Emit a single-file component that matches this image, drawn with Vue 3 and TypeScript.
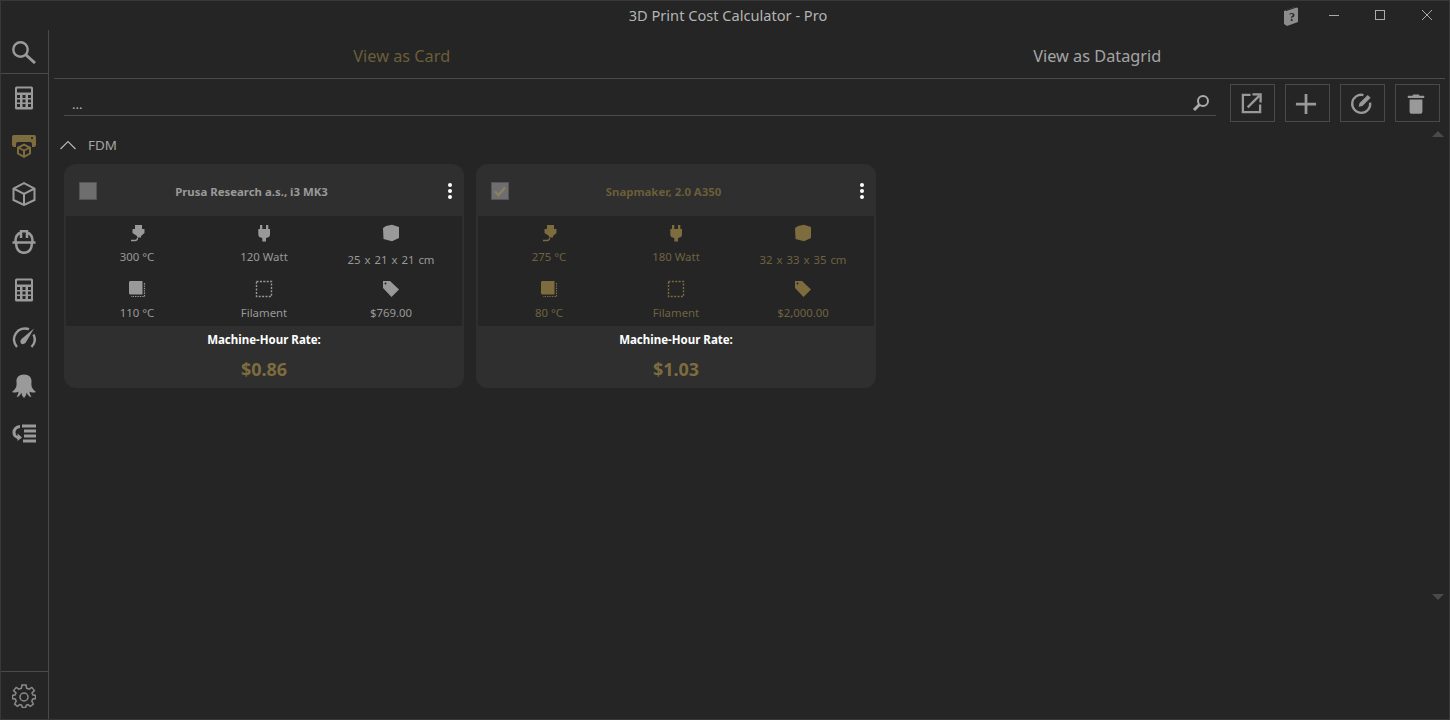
<template>
  <div class="window">
    <header class="titlebar">
      <span class="title">3D Print Cost Calculator - Pro</span>
      <div class="winControls">
        <svg class="helpBook" viewBox="0 0 14 20" width="14" height="20">
          <path d="M0 5 L11 1 L14 2 L14 16 L3 20 L0 18 Z" fill="#8c8c8c" />
          <path d="M2 4.6 L12.6 1" stroke="#252525" stroke-width="1" fill="none" />
          <text x="5" y="15" class="helpMark">?</text>
        </svg>
        <button class="winBtn" aria-label="minimize">
          <svg viewBox="0 0 12 12" width="12" height="12"><path d="M1 6.5 H11" stroke="#aaa" fill="none" /></svg>
        </button>
        <button class="winBtn" aria-label="maximize">
          <svg viewBox="0 0 12 12" width="12" height="12"><rect x="1.5" y="1.5" width="9" height="9" stroke="#aaa" fill="none" /></svg>
        </button>
        <button class="winBtn closeBtn" aria-label="close">
          <svg viewBox="0 0 12 12" width="12" height="12"><path d="M1 1 L11 11 M11 1 L1 11" stroke="#aaa" fill="none" /></svg>
        </button>
      </div>
    </header>

    <div class="main">
      <nav class="sidebar">
        <div class="navSearch">
          <svg viewBox="0 0 24 24" width="24" height="24">
            <circle cx="8.5" cy="9.5" r="7.2" fill="none" stroke="currentColor" stroke-width="2.4" />
            <path d="M13.5 14.5 L23 23" stroke="currentColor" stroke-width="3" fill="none" />
          </svg>
        </div>
        <div class="navList">
          <div v-for="item in navItems" :key="item.name" class="navItem" :class="{ active: item.active }">
            <svg viewBox="0 0 24 24" width="24" height="24">
              <path v-if="item.fill" :d="item.fill" fill="currentColor" fill-rule="evenodd" />
              <path v-if="item.line" :d="item.line" fill="none" stroke="currentColor" :stroke-width="item.weight ?? 2" />
            </svg>
          </div>
        </div>
        <div class="navSettings">
          <svg viewBox="0 0 24 24" width="24" height="24" class="gear">
            <path
              d="M10 1 H14 L14.6 4.2 L17 5.2 L19.8 3.4 L22.4 6.6 L20 9 L20.8 10.8 L23.5 11.5 V14.5 L20.6 15.2 L19.8 17.2 L21.4 20 L18.4 22.4 L16 20.6 L14.4 21.2 L13.6 23.5 H10.4 L9.6 21.2 L7.8 20.6 L5.4 22.4 L2.6 20 L4.2 17.2 L3.4 15.2 L0.5 14.5 V11.5 L3.2 10.8 L4 9 L1.6 6.6 L4.2 3.4 L7 5.2 L9.4 4.2 Z"
              fill="none"
              stroke="currentColor"
              stroke-width="1.5"
            />
            <circle cx="12" cy="13" r="4" fill="none" stroke="currentColor" stroke-width="1.5" />
          </svg>
        </div>
      </nav>

      <section class="content">
        <div class="tabs">
          <div class="tab activeTab">View as Card</div>
          <div class="tab">View as Datagrid</div>
        </div>

        <div class="toolbar">
          <div class="searchBox">
            <span class="searchText">...</span>
            <svg class="searchGlass" viewBox="0 0 18 18" width="18" height="18">
              <circle cx="11" cy="7" r="5" fill="none" stroke="#aaa" stroke-width="2" />
              <path d="M7.5 10.5 L2 16" stroke="#aaa" stroke-width="3" fill="none" />
            </svg>
          </div>
          <button class="toolBtn" aria-label="open">
            <svg viewBox="0 0 24 24" width="23" height="23">
              <path d="M11 3 H3 V21 H21 V13" fill="none" stroke="#999" stroke-width="2.4" />
              <path d="M8 16 L20 4 M13 2.5 H21.5 V11" fill="none" stroke="#999" stroke-width="2.4" />
            </svg>
          </button>
          <button class="toolBtn" aria-label="add">
            <svg viewBox="0 0 24 24" width="22" height="22">
              <path d="M12 1 V23 M1 12 H23" fill="none" stroke="#999" stroke-width="3" />
            </svg>
          </button>
          <button class="toolBtn" aria-label="edit">
            <svg viewBox="0 0 24 24" width="23" height="23">
              <path d="M14 3.2 A9.4 9.4 0 1 0 21 11" fill="none" stroke="#999" stroke-width="2.4" />
              <path d="M9 15.5 L10 11.5 L18.5 3 L21.5 6 L13 14.5 Z" fill="#999" />
            </svg>
          </button>
          <button class="toolBtn" aria-label="delete">
            <svg viewBox="0 0 24 24" width="22" height="22">
              <path d="M9 1.5 H15 L16 3 H21 V5.5 H3 V3 H8 Z" fill="#999" />
              <path d="M5 7 H19 V20.5 Q19 22.5 17 22.5 H7 Q5 22.5 5 20.5 Z" fill="#999" />
            </svg>
          </button>
        </div>

        <div class="listArea">
          <div class="list">
            <div class="groupHead">
              <svg viewBox="0 0 16 10" width="16" height="10">
                <path d="M0.5 9 L8 1.5 L15.5 9" fill="none" stroke="#b5b5b5" stroke-width="1.2" />
              </svg>
              <span>FDM</span>
            </div>
            <div class="cards">
              <article
                v-for="printer in printers"
                :key="printer.name"
                class="card"
                :class="{ selected: printer.selected }"
              >
                <div class="cardHead">
                  <span class="check">
                    <svg v-if="printer.selected" viewBox="0 0 18 18" width="18" height="18">
                      <path d="M4 9.5 L7.5 13 L14 5.5" fill="none" stroke="#8a8163" stroke-width="2.4" />
                    </svg>
                  </span>
                  <span class="cardName">{{ printer.name }}</span>
                  <span class="dots"><i></i><i></i><i></i></span>
                </div>
                <div class="specs">
                  <div v-for="spec in specsOf(printer)" :key="spec.key" class="spec">
                    <svg viewBox="0 0 18 18" width="18" height="18">
                      <path v-if="icons[spec.key]" :d="icons[spec.key]" fill="currentColor" fill-rule="evenodd" />
                      <path
                        v-if="spec.key === 'material'"
                        d="M1.5 1.5 H16.5 V16.5 H1.5 Z"
                        fill="none"
                        stroke="currentColor"
                        stroke-width="1.4"
                        stroke-dasharray="2 1.4"
                      />
                      <path
                        v-if="spec.key === 'bed'"
                        d="M16.5 3 V16.5 H3"
                        fill="none"
                        stroke="currentColor"
                        stroke-width="1.2"
                        stroke-dasharray="1.4 1"
                      />
                      <path
                        v-if="spec.key === 'nozzle'"
                        d="M3 16.5 H7 Q9.5 16.5 9.5 14"
                        fill="none"
                        stroke="currentColor"
                        stroke-width="1.3"
                      />
                    </svg>
                    <span class="specLabel" :class="{ low: spec.key === 'size' }">{{ spec.text }}</span>
                  </div>
                </div>
                <div class="cardFoot">
                  <span class="rateLabel">Machine-Hour Rate:</span>
                  <span class="rate">{{ printer.rate }}</span>
                </div>
              </article>
            </div>
          </div>
          <div class="scroll">
            <span class="arrow up"></span>
            <span class="arrow down"></span>
          </div>
        </div>
      </section>
    </div>
  </div>
</template>

<script setup lang="ts">
interface IPrinter {
  name: string;
  selected: boolean;
  nozzle: string;
  power: string;
  size: string;
  bed: string;
  material: string;
  price: string;
  rate: string;
}

interface INavItem {
  name: string;
  active?: boolean;
  fill?: string;
  line?: string;
  weight?: number;
}

const calc =
  "M4.5 0.5 H19.5 Q21 0.5 21 2 V22 Q21 23.5 19.5 23.5 H4.5 Q3 23.5 3 22 V2 Q3 0.5 4.5 0.5 Z M5 2.5 H19 V6.5 H5 Z M5 9 H8 V12 H5 Z M10.5 9 H13.5 V12 H10.5 Z M16 9 H19 V12 H16 Z M5 13.5 H8 V16.5 H5 Z M10.5 13.5 H13.5 V16.5 H10.5 Z M16 13.5 H19 V16.5 H16 Z M5 18 H8 V21 H5 Z M10.5 18 H13.5 V21 H10.5 Z M16 18 H19 V21 H16 Z";

const navItems: INavItem[] = [
  { name: "calculator", fill: calc },
  {
    name: "printers",
    active: true,
    fill: "M2 1 H22 Q24 1 24 3 V11 Q24 13 22 13 H20 V10 Q20 8 18 8 H6 Q4 8 4 10 V13 H2 Q0 13 0 11 V3 Q0 1 2 1 Z M20 3 A1 1 0 1 0 20.01 3 Z M12 9.5 L19 13 V20 L12 24 L5 20 V13 Z M12 11.8 L8.4 13.7 L12 15.6 L15.6 13.7 Z M7 15 V19 L11 21.3 V17 Z M17 15 L13 17 V21.3 L17 19 Z",
  },
  { name: "filament", line: "M12 1.2 L22.5 6.5 V18 L12 23 L1.5 18 V6.5 Z M1.5 6.5 L12 11.8 L22.5 6.5 M12 11.8 V23" },
  {
    name: "worker",
    weight: 2.5,
    line: "M3.5 11.5 Q3.5 4 9 2.5 M15 2.5 Q20.5 4 20.5 11.5 M9 8 V1.2 H15 V8 M0.5 12.5 H23.5 M4 13 Q4.5 22.8 12 22.8 Q19.5 22.8 20 13",
  },
  { name: "materials", fill: calc },
  {
    name: "gauge",
    weight: 2.4,
    line: "M5 21 A11 11 0 0 1 17 3.2 M21.5 8.5 A11 11 0 0 1 19.5 21",
    fill: "M22 2.5 L13.5 17 Q11 19 9 17.5 Q7.5 15 9.5 13 Z",
  },
  {
    name: "octoprint",
    fill: "M12 0.5 C17 0.5 20 3.5 19.5 8 C19 12 20 15 24 18 C21.5 19 19 18.5 17.5 17.5 C17.5 19.5 18.5 21.5 19.5 23 C17.5 23 15.5 21 14.5 18.5 C14.5 20.5 13.5 22.5 12 24 C10.5 22.5 9.5 20.5 9.5 18.5 C8.5 21 6.5 23 4.5 23 C5.5 21.5 6.5 19.5 6.5 17.5 C5 18.5 2.5 19 0 18 C4 15 5 12 4.5 8 C4 3.5 7 0.5 12 0.5 Z",
  },
  {
    name: "log",
    fill: "M10 2.5 H24 V5.5 H10 Z M12 7.5 H24 V10.5 H12 Z M12 12.5 H24 V15.5 H12 Z M11 17.5 H24 V20.5 H11 Z M8 3 V6 Q3.5 6.5 3.5 10.5 Q3.5 13 5.5 14 V11.5 L10 15.5 L5.5 19 V17 Q0.5 15 0.5 10.5 Q0.5 4 8 3 Z",
  },
];

const icons: Record<string, string> = {
  nozzle: "M7 1 H14 V5 H16.5 V9 L13 12 V13.5 H9 V12 L4.5 9 V5 H7 Z",
  power: "M5 1 H7.3 V5 H11 V1 H13.3 V5 H15 V10.5 Q15 13.5 11 14 V17.5 H7.3 V14 Q3.3 13.5 3.3 10.5 V5 H5 Z",
  size: "M4 2 L10 0.7 L17 3 V14 L10 17.3 L1.5 15 L1 4 Z",
  bed: "M2 1 H14.5 V14.5 H2 L1 13.5 V2 Z",
  price: "M1 1 H8 L17 9.5 L9.5 17 L1 8 Z M3.5 2.6 A0.9 0.9 0 1 0 3.51 2.6 Z",
};

const printers: IPrinter[] = [
  {
    name: "Prusa Research a.s., i3 MK3",
    selected: false,
    nozzle: "300 °C",
    power: "120 Watt",
    size: "25 x 21 x 21 cm",
    bed: "110 °C",
    material: "Filament",
    price: "$769.00",
    rate: "$0.86",
  },
  {
    name: "Snapmaker, 2.0 A350",
    selected: true,
    nozzle: "275 °C",
    power: "180 Watt",
    size: "32 x 33 x 35 cm",
    bed: "80 °C",
    material: "Filament",
    price: "$2,000.00",
    rate: "$1.03",
  },
];

const specsOf = (p: IPrinter) => [
  { key: "nozzle", text: p.nozzle },
  { key: "power", text: p.power },
  { key: "size", text: p.size },
  { key: "bed", text: p.bed },
  { key: "material", text: p.material },
  { key: "price", text: p.price },
];
</script>

<style scoped>
.window {
  width: 1450px;
  height: 720px;
  box-sizing: border-box;
  border: 1px solid #383838;
  background: #252525;
  color: #a5a5a5;
  font-family: "Noto Sans", "Open Sans", sans-serif;
  display: flex;
  flex-direction: column;
  overflow: hidden;
}
.titlebar {
  height: 29px;
  flex: none;
  position: relative;
  display: flex;
  align-items: center;
  justify-content: center;
}
.title {
  font-size: 14.6px;
  color: #b4b4b4;
  margin: 0 0 2px 6px;
}
.winControls {
  position: absolute;
  right: 0;
  top: 0;
  height: 29px;
  display: flex;
  align-items: center;
}
.helpBook {
  margin: 0 13px 0 0;
}
.helpMark {
  font-size: 12px;
  font-weight: 700;
  fill: #252525;
  font-family: "Liberation Serif", serif;
}
.winBtn {
  width: 46px;
  height: 29px;
  padding: 0 0 2px;
  background: none;
  border: none;
  display: flex;
  align-items: center;
  justify-content: center;
}
.closeBtn {
  padding-left: 2px;
}
.main {
  flex: 1;
  display: flex;
  min-height: 0;
}
.sidebar {
  width: 48px;
  flex: none;
  box-sizing: border-box;
  border-right: 1px solid #4a4a4a;
  display: flex;
  flex-direction: column;
  color: #9a9a9a;
}
.navSearch {
  height: 43px;
  flex: none;
  border-bottom: 1px solid #4a4a4a;
  display: flex;
  align-items: center;
  justify-content: center;
  padding-right: 1px;
}
.navList {
  flex: 1;
  display: flex;
  flex-direction: column;
  align-items: center;
  gap: 24px;
  padding: 12px 1px 0 0;
}
.navItem {
  height: 24px;
  display: flex;
}
.navItem.active {
  color: #7d6c3e;
}
.navSettings {
  height: 47px;
  flex: none;
  border-top: 1px solid #4a4a4a;
  display: flex;
  align-items: center;
  justify-content: center;
  padding-right: 1px;
}
.gear {
  color: #8a8a8a;
}
.content {
  flex: 1;
  min-width: 0;
  display: flex;
  flex-direction: column;
  padding-left: 5px;
}
.tabs {
  height: 48px;
  flex: none;
  margin-right: 4px;
  border-bottom: 1px solid #4a4a4a;
  display: flex;
}
.tab {
  flex: 1;
  display: flex;
  align-items: center;
  justify-content: center;
  font-size: 16.3px;
  padding-top: 3px;
  color: #a5a5a5;
}
.activeTab {
  color: #6b5e38;
}
.toolbar {
  flex: none;
  display: flex;
  gap: 10px;
  padding: 5px 9px 0 10px;
}
.searchBox {
  flex: 1;
  height: 31px;
  margin-right: 4px;
  border-bottom: 1px solid #4a4a4a;
  display: flex;
  align-items: center;
  justify-content: space-between;
  padding: 0 6px 0 8px;
  font-size: 13px;
  color: #b5b5b5;
}
.searchText {
  padding-top: 8px;
}
.searchGlass {
  margin-top: 6px;
}
.toolBtn {
  width: 45px;
  height: 38px;
  padding: 1px 3px 0 0;
  box-sizing: border-box;
  background: none;
  border: 1px solid #4a4a4a;
  display: flex;
  align-items: center;
  justify-content: center;
}
.listArea {
  flex: 1;
  min-height: 0;
  display: flex;
}
.list {
  flex: 1;
  padding-left: 10px;
}
.groupHead {
  height: 42px;
  display: flex;
  align-items: center;
  gap: 12px;
  font-size: 13.4px;
  color: #a5a5a5;
  box-sizing: border-box;
  padding-top: 3px;
  margin-left: -4px;
}
.cards {
  display: flex;
  gap: 12px;
}
.card {
  width: 400px;
  height: 224px;
  border-radius: 12px;
  background: #2f2f2f;
  display: flex;
  flex-direction: column;
  overflow: hidden;
}
.cardHead {
  height: 52px;
  box-sizing: border-box;
  flex: none;
  display: flex;
  align-items: center;
  padding: 2px 10px 0 15px;
}
.check {
  width: 18px;
  height: 18px;
  background: #6e6e6e;
  box-sizing: border-box;
  border: 1px solid #555;
  display: flex;
}
.check svg {
  margin: -1px;
}
.cardName {
  flex: 1;
  text-align: center;
  font-size: 11.4px;
  font-weight: 700;
  color: #9a9a9a;
  margin-right: 40px;
}
.dots {
  width: 8px;
  display: flex;
  flex-direction: column;
  align-items: center;
  gap: 2px;
}
.dots i {
  width: 4px;
  height: 4px;
  border-radius: 50%;
  background: #fff;
}
.specs {
  height: 110px;
  flex: none;
  margin: 0 2px;
  padding: 0 7.5px;
  background: #252525;
  display: grid;
  grid-template-columns: repeat(3, 1fr);
  grid-template-rows: 56px 54px;
  color: #999;
}
.selected .specs {
  color: #6f6340;
}
.selected .cardName {
  color: #6b5e38;
}
.spec {
  display: flex;
  flex-direction: column;
  align-items: center;
  padding-top: 8px;
  box-sizing: border-box;
}
.specLabel {
  font-size: 11.4px;
  line-height: 16px;
  margin-top: 7px;
  white-space: nowrap;
}
.specLabel.low {
  margin-top: 10px;
  word-spacing: 1px;
}
.selected .spec svg {
  color: #7d6c3e;
}
.cardFoot {
  flex: 1;
  display: flex;
  flex-direction: column;
  align-items: center;
}
.rateLabel {
  font-size: 11.5px;
  font-weight: 700;
  color: #fff;
  line-height: 16px;
  margin-top: 6px;
}
.rate {
  font-size: 18px;
  font-weight: 700;
  color: #7d6c3e;
  line-height: 24px;
  margin-top: 9px;
}
.scroll {
  width: 22px;
  height: 478px;
  padding: 9px 0 0;
  box-sizing: border-box;
  display: flex;
  flex-direction: column;
  justify-content: space-between;
  align-items: center;
  flex: none;
}
.arrow {
  width: 0;
  height: 0;
  border-left: 6px solid transparent;
  border-right: 6px solid transparent;
}
.arrow.up {
  border-bottom: 6px solid #4a4a4a;
}
.arrow.down {
  border-top: 6px solid #4a4a4a;
}
</style>

<style>
html,
body {
  margin: 0;
  background: #252525;
}
</style>
